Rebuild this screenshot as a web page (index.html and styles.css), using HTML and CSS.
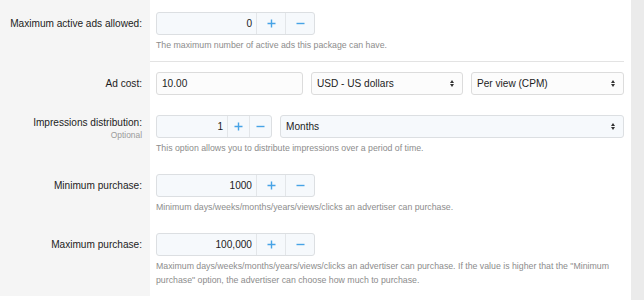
FILE: index.html
```html
<!DOCTYPE html>
<html>
<head>
<meta charset="utf-8">
<link rel="stylesheet" href="styles.css">
</head>
<body>
<div class="panel">
  <div class="row row-first">
    <div class="label"><span>Maximum active ads allowed:</span></div>
    <div class="cell sep">
      <div class="spin spin-wide">
        <div class="spin-val">0</div>
        <div class="spin-btn"><svg width="9" height="9" viewBox="0 0 9 9"><path d="M4.5 0.5v8M0.5 4.5h8"/></svg></div>
        <div class="spin-btn"><svg width="9" height="9" viewBox="0 0 9 9"><path d="M0.5 4.5h8"/></svg></div>
      </div>
      <div class="help">The maximum number of active ads this package can have.</div>
    </div>
  </div>

  <div class="row">
    <div class="label"><span>Ad cost:</span></div>
    <div class="cell">
      <div class="triple">
        <div class="field">10.00</div>
        <div class="select">USD - US dollars<i class="arrows"></i></div>
        <div class="select">Per view (CPM)<i class="arrows"></i></div>
      </div>
    </div>
  </div>

  <div class="row row-tall">
    <div class="label"><span>Impressions distribution:</span><small>Optional</small></div>
    <div class="cell">
      <div class="pair">
        <div class="spin spin-narrow">
          <div class="spin-val">1</div>
          <div class="spin-btn"><svg width="9" height="9" viewBox="0 0 9 9"><path d="M4.5 0.5v8M0.5 4.5h8"/></svg></div>
          <div class="spin-btn"><svg width="9" height="9" viewBox="0 0 9 9"><path d="M0.5 4.5h8"/></svg></div>
        </div>
        <div class="select select-tint">Months<i class="arrows"></i></div>
      </div>
      <div class="help">This option allows you to distribute impressions over a period of time.</div>
    </div>
  </div>

  <div class="row">
    <div class="label"><span>Minimum purchase:</span></div>
    <div class="cell">
      <div class="spin spin-wide">
        <div class="spin-val">1000</div>
        <div class="spin-btn"><svg width="9" height="9" viewBox="0 0 9 9"><path d="M4.5 0.5v8M0.5 4.5h8"/></svg></div>
        <div class="spin-btn"><svg width="9" height="9" viewBox="0 0 9 9"><path d="M0.5 4.5h8"/></svg></div>
      </div>
      <div class="help">Minimum days/weeks/months/years/views/clicks an advertiser can purchase.</div>
    </div>
  </div>

  <div class="row">
    <div class="label"><span>Maximum purchase:</span></div>
    <div class="cell">
      <div class="spin spin-wide">
        <div class="spin-val">100,000</div>
        <div class="spin-btn"><svg width="9" height="9" viewBox="0 0 9 9"><path d="M4.5 0.5v8M0.5 4.5h8"/></svg></div>
        <div class="spin-btn"><svg width="9" height="9" viewBox="0 0 9 9"><path d="M0.5 4.5h8"/></svg></div>
      </div>
      <div class="help">Maximum days/weeks/months/years/views/clicks an advertiser can purchase. If the value is higher that the "Minimum purchase" option, the advertiser can choose how much to purchase.</div>
    </div>
  </div>
</div>
</body>
</html>
```

FILE: styles.css
```css
html, body {
  margin: 0;
  padding: 0;
  background: #ebebeb;
  font-family: "Liberation Sans", Arial, sans-serif;
  color: #1c1c1c;
}

.panel {
  width: 631px;
  height: 300px;
  background: #ffffff;
  overflow: hidden;
}

.row {
  display: grid;
  grid-template-columns: 150px 1fr;
}

.label {
  background: #f5f5f5;
  padding: 15px 8px 0 0;
  text-align: right;
  font-size: 10.1px;
  line-height: 14px;
  white-space: nowrap;
}

.label span {
  display: block;
}

.label small {
  display: block;
  font-size: 8.4px;
  line-height: 10px;
  color: #9a9a9a;
}

.cell {
  margin-right: 7px;
  padding: 10px 0 9px 6px;
}

.row-first .cell {
  padding-top: 12px;
}

.row-first .label {
  padding-top: 17px;
}

.row-tall .cell {
  padding-top: 11px;
}

.row-tall .label {
  padding-top: 12px;
}

.sep {
  border-bottom: 1px solid #e3e3e3;
}

.spin {
  display: flex;
  height: 23px;
  box-sizing: border-box;
  border: 1px solid #dcdfe2;
  border-radius: 3px;
  background: #f6f9fc;
}

.spin-wide {
  width: 159px;
}

.spin-narrow {
  width: 116px;
}

.spin-val {
  flex: 1;
  text-align: right;
  padding-right: 4px;
  font-size: 10.1px;
  line-height: 21px;
  color: #1c1c1c;
}

.spin-btn {
  width: 28px;
  border-left: 1px solid #e3e6e9;
  display: flex;
  align-items: center;
  justify-content: center;
}

.spin-narrow .spin-btn {
  width: 21px;
}

.spin-btn svg {
  stroke: #47a3e6;
  stroke-width: 1.4;
  fill: none;
}

.help {
  margin-top: 3px;
  font-size: 8.75px;
  line-height: 14px;
  color: #8c8c8c;
}

.triple {
  display: grid;
  grid-template-columns: 147px 152px 1fr;
  gap: 8px;
}

.pair {
  display: flex;
  gap: 8px;
}

.pair .select {
  flex: 1;
}

.field,
.select {
  position: relative;
  height: 23px;
  box-sizing: border-box;
  border: 1px solid #dcdcdc;
  border-radius: 3px;
  background: #fcfcfc;
  padding-left: 5px;
  font-size: 10.1px;
  line-height: 21px;
  color: #1c1c1c;
}

.select-tint {
  background: #f6f9fc;
  border-color: #dcdfe2;
}

.arrows {
  position: absolute;
  right: 8px;
  top: 7px;
  width: 4px;
  height: 7px;
}

.arrows::before,
.arrows::after {
  content: "";
  position: absolute;
  left: 0;
  border-left: 2px solid transparent;
  border-right: 2px solid transparent;
}

.arrows::before {
  top: 0;
  border-bottom: 3px solid #333333;
}

.arrows::after {
  bottom: 0;
  border-top: 3px solid #333333;
}
```
